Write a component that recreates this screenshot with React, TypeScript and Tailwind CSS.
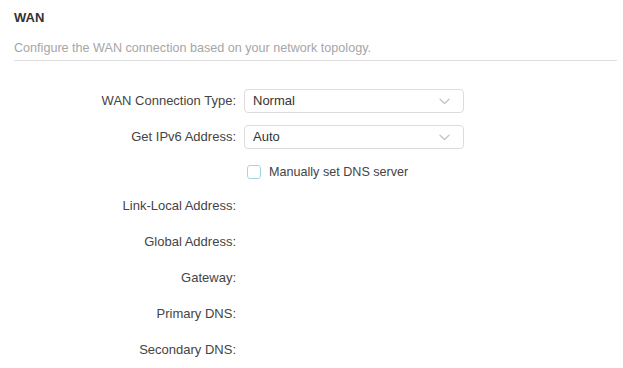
import React from 'react';

const FONT = { fontFamily: '"Liberation Sans", Arial, sans-serif' };

function Chevron() {
  return (
    <svg width="11" height="7" viewBox="0 0 11 7" className="shrink-0">
      <path d="M1 1.2 L5.5 5.5 L10 1.2" fill="none" stroke="#c4c4c4" strokeWidth="1.3" strokeLinecap="round" strokeLinejoin="round" />
    </svg>
  );
}

function Label({ children }: { children: React.ReactNode }) {
  return <div className="w-[222px] shrink-0 text-right text-[13px] leading-4 text-[#444]">{children}</div>;
}

function Select({ value }: { value: string }) {
  return (
    <div className="ml-2 flex h-6 w-[220px] items-center justify-between rounded-[4px] border border-[#dcdcdc] bg-white pl-2 pr-[13px]">
      <span className="text-[13px] leading-4 text-[#333]">{value}</span>
      <Chevron />
    </div>
  );
}

export default function App() {
  const infoRows = ['Link-Local Address:', 'Global Address:', 'Gateway:', 'Primary DNS:', 'Secondary DNS:'];

  return (
    <div className="min-h-[368px] bg-white pl-[14px] pr-[6px] pt-[10px]" style={FONT}>
      <div className="text-[13px] font-bold leading-4 text-[#333]">WAN</div>
      <div className="mt-[14px] border-b border-[#dedede] pb-1 text-[12.6px] leading-4 text-[#a6a6a6]">
        Configure the WAN connection based on your network topology.
      </div>

      <div className="mt-[28px] flex flex-col">
        <div className="flex h-6 items-center">
          <Label>WAN Connection Type:</Label>
          <Select value="Normal" />
        </div>
        <div className="mt-3 flex h-6 items-center">
          <Label>Get IPv6 Address:</Label>
          <Select value="Auto" />
        </div>
        <div className="mt-[11px] flex h-6 items-center">
          <div className="w-[222px] shrink-0" />
          <div className="ml-[11px] h-[14px] w-[14px] rounded-[3px] border-[1.5px] border-[#a3d8e2] bg-white" />
          <span className="ml-2 text-[12.6px] leading-4 text-[#444]">Manually set DNS server</span>
        </div>
        {infoRows.map((r, i) => (
          <div key={r} className={`flex h-6 items-center ${i === 0 ? 'mt-[10px]' : 'mt-3'}`}>
            <Label>{r}</Label>
          </div>
        ))}
      </div>
    </div>
  );
}
